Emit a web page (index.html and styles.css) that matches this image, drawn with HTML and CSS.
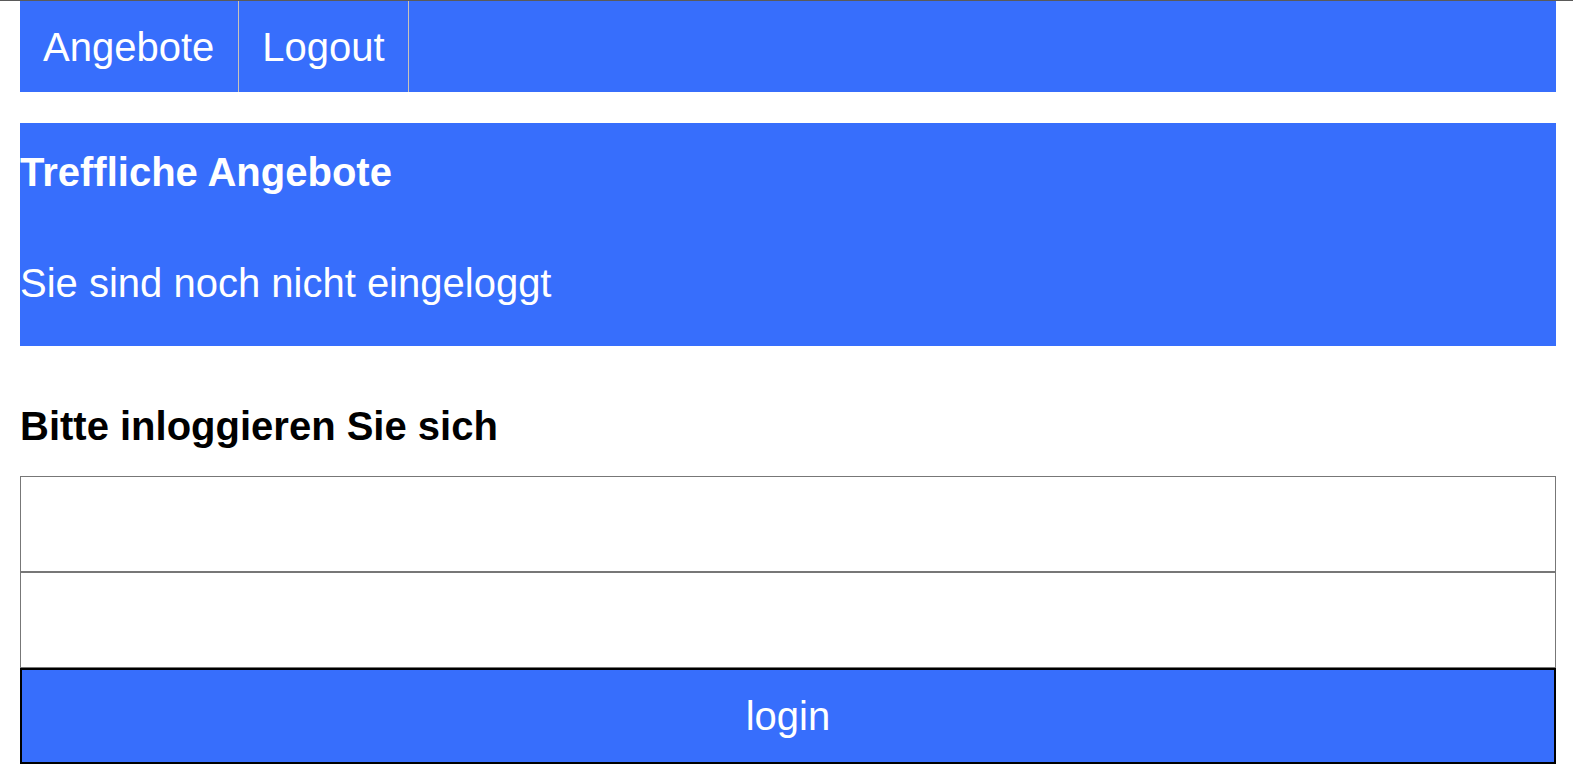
FILE: index.html
```html
<!DOCTYPE html>
<html lang="de">
<head>
<meta charset="utf-8">
<title>Treffliche Angebote</title>
<link rel="stylesheet" href="styles.css">
</head>
<body>
<div class="page">
  <nav class="nav">
    <a class="nav-item" href="#">Angebote</a>
    <a class="nav-item" href="#">Logout</a>
  </nav>
  <header class="banner">
    <h2 class="banner-title">Treffliche Angebote</h2>
    <p class="banner-text">Sie sind noch nicht eingeloggt</p>
  </header>
  <form class="login">
    <h3 class="login-title">Bitte inloggieren Sie sich</h3>
    <input class="field" type="text">
    <input class="field" type="password">
    <button class="btn" type="button">login</button>
  </form>
</div>
</body>
</html>
```

FILE: styles.css
```css
html, body {
  margin: 0;
  padding: 0;
  background: #ffffff;
}
body {
  border-top: 1px solid #5a5a5a;
  font-family: "Liberation Sans", Arial, sans-serif;
  font-size: 40px;
  color: #000;
}
.page {
  width: 1536px;
  margin: 0 0 0 20px;
}
.nav {
  display: flex;
  height: 91px;
  background: #376efc;
}
.nav-item {
  display: flex;
  align-items: center;
  padding: 0 23px;
  border-right: 1px solid #c9c4ba;
  color: #fff;
  text-decoration: none;
  font-size: 40px;
  line-height: 46px;
}
.nav-item:first-child {
  padding-right: 24px;
}
.banner {
  margin-top: 31px;
  background: #376efc;
  color: #fff;
  padding: 26px 0 40px 0;
}
.banner-title {
  margin: 0;
  font-size: 40px;
  line-height: 46px;
  font-weight: bold;
}
.banner-text {
  margin: 65px 0 0 0;
  font-size: 40px;
  line-height: 46px;
}
.login {
  display: flex;
  flex-direction: column;
}
.login-title {
  margin: 57px 0 27px 0;
  font-size: 40px;
  line-height: 46px;
  font-weight: bold;
}
.field {
  box-sizing: border-box;
  width: 100%;
  height: 96px;
  margin: 0;
  border: 1px solid #777;
  background: #fff;
  font-family: inherit;
  font-size: 40px;
  padding: 0 10px;
}
.btn {
  box-sizing: border-box;
  width: 100%;
  height: 96px;
  margin: 0;
  border: 2px solid #000;
  background: #376efc;
  color: #fff;
  font-family: inherit;
  font-size: 40px;
  cursor: pointer;
}
```
